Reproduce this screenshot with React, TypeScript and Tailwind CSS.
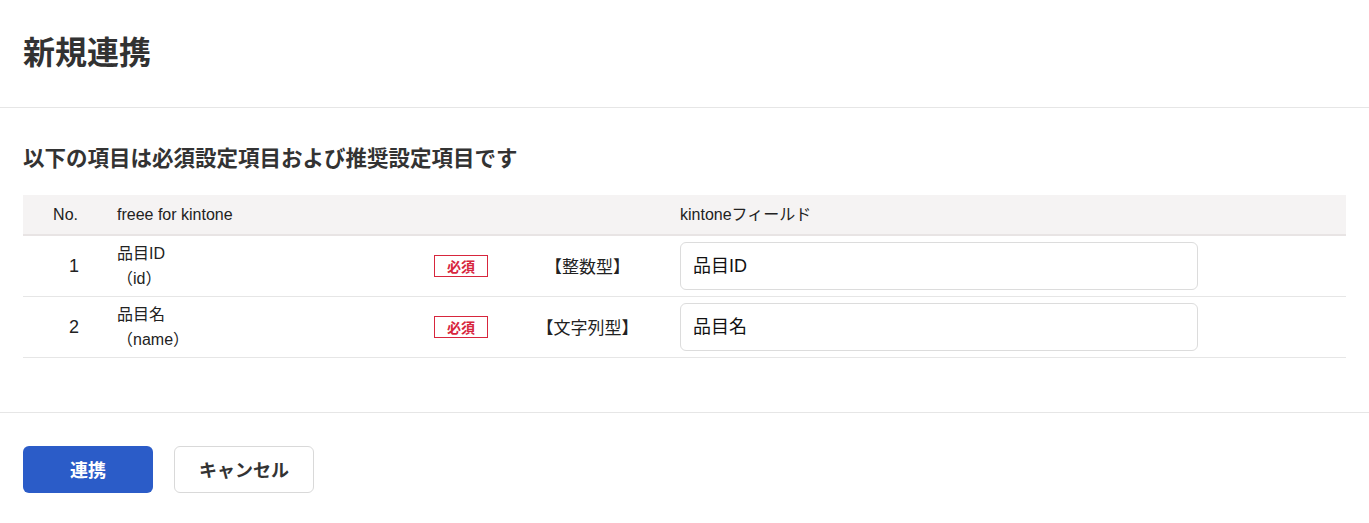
import React from "react";

const rows = [
  { no: 1, label: "品目ID", code: "（id）", type: "【整数型】", field: "品目ID" },
  { no: 2, label: "品目名", code: "（name）", type: "【文字列型】", field: "品目名" },
];

export default function App() {
  return (
    <div className="min-h-screen bg-white text-[#333333]" style={{ fontFamily: '"Noto Sans CJK JP", sans-serif' }}>
      <div className="h-[108px] border-b border-[#e6e6e6] px-[23px] pt-[32px]">
        <h1 className="text-[32px] font-bold leading-[36px] text-[#323232]">新規連携</h1>
      </div>

      <div className="px-[23px]">
        <h2 className="mt-[33px] text-[21.5px] font-bold leading-[32px] text-[#333333]">
          以下の項目は必須設定項目および推奨設定項目です
        </h2>

        <div className="mt-[22px] w-[1323px]" style={{ fontFamily: '"Liberation Sans", "Noto Sans CJK JP", sans-serif' }}>
          <div className="flex h-[41px] items-center border-b-2 border-[#e8e4e4] bg-[#f5f3f3] text-[16px] text-[#222222]">
            <div className="w-[70px] pr-[15px] text-right">No.</div>
            <div className="w-[341px] pl-[24px]">freee for kintone</div>
            <div className="w-[86px]" />
            <div className="w-[135px]" />
            <div className="pl-[25px]">kintoneフィールド</div>
          </div>

          {rows.map((r) => (
            <div key={r.no} className="flex h-[61px] items-center border-b border-[#e6e6e6] text-[#222222]">
              <div className="w-[70px] pr-[14px] text-right text-[18px]">{r.no}</div>
              <div className="w-[341px] pl-[24px] text-[16px] leading-[25px]">
                <div>{r.label}</div>
                <div>{r.code}</div>
              </div>
              <div className="w-[86px]">
                <span
                  className="flex h-[22px] w-[54px] items-center justify-center border border-[#d7263d] text-[14px] font-bold text-[#d7263d]"
                  style={{ fontFamily: '"Noto Sans CJK JP", sans-serif' }}
                >
                  必須
                </span>
              </div>
              <div className="w-[135px] text-center text-[17px]" style={{ fontFamily: '"Noto Sans CJK JP", sans-serif' }}>
                {r.type}
              </div>
              <div className="pl-[25px]">
                <div className="flex h-[48px] w-[518px] items-center rounded-[6px] border border-[#dcdcdc] pl-[12px] text-[18px] text-[#111111]">
                  {r.field}
                </div>
              </div>
            </div>
          ))}
        </div>
      </div>

      <div className="mt-[54px] border-t border-[#e6e6e6] px-[23px] pt-[33px]">
        <div className="flex gap-[21px]">
          <button className="h-[47px] w-[130px] rounded-[6px] bg-[#2b5cc8] text-[18px] font-bold text-white">連携</button>
          <button className="h-[47px] w-[140px] rounded-[6px] border border-[#d9d9d9] bg-white text-[18px] font-bold text-[#333333]">
            キャンセル
          </button>
        </div>
      </div>
    </div>
  );
}
